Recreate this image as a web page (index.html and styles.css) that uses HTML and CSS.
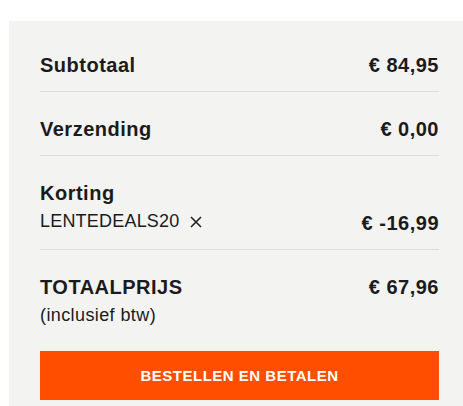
FILE: index.html
```
<!DOCTYPE html>
<html lang="nl">
<head>
<meta charset="utf-8">
<link rel="stylesheet" href="styles.css">
</head>
<body>
<div class="panel">
  <div class="row">
    <div class="label">Subtotaal</div>
    <div class="amount">€ 84,95</div>
  </div>
  <div class="row">
    <div class="label">Verzending</div>
    <div class="amount">€ 0,00</div>
  </div>
  <div class="row row-end">
    <div class="col">
      <div class="label">Korting</div>
      <div class="code">LENTEDEALS20<span class="remove"><svg width="12" height="12" viewBox="0 0 12 12"><path d="M1 1L11 11M11 1L1 11" stroke="#222" stroke-width="1.6" fill="none"/></svg></span></div>
    </div>
    <div class="amount">€ -16,99</div>
  </div>
  <div class="row row-total">
    <div class="col">
      <div class="label">TOTAALPRIJS</div>
      <div class="note">(inclusief btw)</div>
    </div>
    <div class="amount">€ 67,96</div>
  </div>
  <button class="order">BESTELLEN EN BETALEN</button>
</div>
</body>
</html>
```
FILE: styles.css
```
html, body {
  margin: 0;
  padding: 0;
  overflow: hidden;
  background: #ffffff;
}
body {
  font-family: "Liberation Sans", Arial, sans-serif;
  color: #1b1b1b;
}
.panel {
  margin: 21px 0 0 9px;
  padding: 7px 24px 20px 31px;
  background: #f3f3f1;
}
.row {
  display: flex;
  justify-content: space-between;
  align-items: flex-start;
  padding: 25px 0 14px;
  border-bottom: 1px solid #dcdcda;
}
.row-end {
  align-items: flex-end;
}
.row-total {
  border-bottom: none;
  padding-bottom: 0;
}
.col {
  display: flex;
  flex-direction: column;
}
.label, .amount {
  font-size: 20px;
  line-height: 24px;
  font-weight: bold;
  letter-spacing: 0.5px;
}
.code {
  font-size: 18px;
  line-height: 28px;
  margin-top: 2px;
  letter-spacing: 0.2px;
  display: flex;
  align-items: center;
}
.remove {
  display: inline-flex;
  margin-left: 11px;
  margin-top: 2px;
}
.note {
  font-size: 18px;
  line-height: 22px;
  margin-top: 5px;
  letter-spacing: 0.4px;
}
.order {
  display: block;
  width: 100%;
  height: 49px;
  margin-top: 25px;
  border: none;
  background: #ff4e00;
  color: #ffffff;
  font-family: "Liberation Sans", Arial, sans-serif;
  font-size: 15px;
  font-weight: bold;
  letter-spacing: 0.5px;
  padding: 0;
}
```
